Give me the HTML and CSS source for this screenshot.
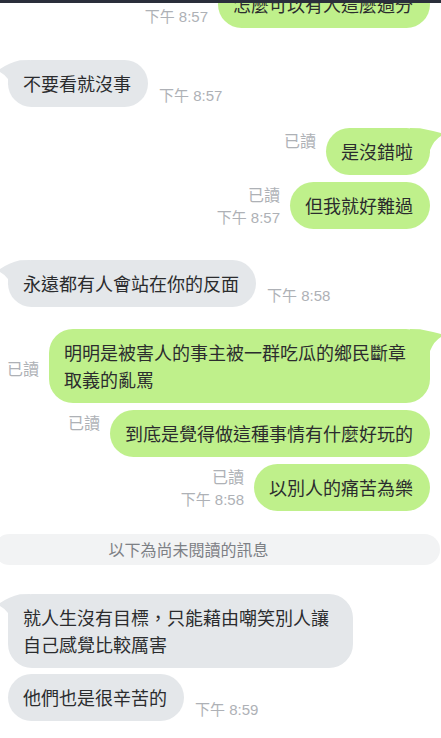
FILE: index.html
```html
<!DOCTYPE html>
<html lang="zh-Hant">
<head>
<meta charset="utf-8">
<title>Chat</title>
<link rel="stylesheet" href="styles.css">
</head>
<body>
<div class="screen">
  <div class="topbar"></div>
  <div class="chat">
    <div class="row out first">
      <div class="meta"><span>已讀</span><span>下午 8:57</span></div>
      <div class="bubble green">怎麼可以有人這麼過分</div>
    </div>

    <div class="row in gap-l2">
      <div class="bubble grey">
        <svg class="tail tail-left" width="30" height="28" viewBox="0 0 30 28"><path d="M0,11 Q9,5 20,2.3 Q25,2 30,2 L30,27 L8,27 L8,21 Q4,16 0,14 Z"/></svg>
        不要看就沒事
      </div>
      <div class="meta"><span>下午 8:57</span></div>
    </div>

    <div class="row out gap-m1">
      <div class="meta no-time"><span>已讀</span></div>
      <div class="bubble green">
        <svg class="tail tail-right" width="41" height="28" viewBox="0 0 41 28"><path d="M41,7 Q31,4.5 20,2.3 Q15,2 10,2 L10,27 L30,27 L30,24 Q34,14 41,10 Z"/></svg>
        是沒錯啦
      </div>
    </div>

    <div class="row out gap-s">
      <div class="meta"><span>已讀</span><span>下午 8:57</span></div>
      <div class="bubble green">但我就好難過</div>
    </div>

    <div class="row in gap-l">
      <div class="bubble grey">
        <svg class="tail tail-left" width="30" height="28" viewBox="0 0 30 28"><path d="M0,11 Q9,5 20,2.3 Q25,2 30,2 L30,27 L8,27 L8,21 Q4,16 0,14 Z"/></svg>
        永遠都有人會站在你的反面
      </div>
      <div class="meta"><span>下午 8:58</span></div>
    </div>

    <div class="row out gap-m">
      <div class="meta no-time"><span>已讀</span></div>
      <div class="bubble green">
        <svg class="tail tail-right" width="41" height="28" viewBox="0 0 41 28"><path d="M41,7 Q31,4.5 20,2.3 Q15,2 10,2 L10,27 L30,27 L30,24 Q34,14 41,10 Z"/></svg>
        明明是被害人的事主被一群吃瓜的鄉民斷章取義的亂罵
      </div>
    </div>

    <div class="row out gap-s">
      <div class="meta no-time"><span>已讀</span></div>
      <div class="bubble green">到底是覺得做這種事情有什麼好玩的</div>
    </div>

    <div class="row out gap-s">
      <div class="meta"><span>已讀</span><span>下午 8:58</span></div>
      <div class="bubble green">以別人的痛苦為樂</div>
    </div>

    <div class="divider">以下為尚未閱讀的訊息</div>

    <div class="row in gap-d">
      <div class="bubble grey">
        <svg class="tail tail-left" width="30" height="28" viewBox="0 0 30 28"><path d="M0,11 Q9,5 20,2.3 Q25,2 30,2 L30,27 L8,27 L8,21 Q4,16 0,14 Z"/></svg>
        就人生沒有目標，只能藉由嘲笑別人讓自己感覺比較厲害
      </div>
    </div>

    <div class="row in gap-xs">
      <div class="bubble grey">他們也是很辛苦的</div>
      <div class="meta"><span>下午 8:59</span></div>
    </div>
  </div>
</div>
</body>
</html>
```

FILE: styles.css
```css
html, body {
  margin: 0;
  padding: 0;
  background: #ffffff;
}

.screen {
  position: relative;
  width: 441px;
  height: 738px;
  overflow: hidden;
  background: #ffffff;
  font-family: "Liberation Sans", "Noto Sans CJK TC", sans-serif;
}

.topbar {
  position: absolute;
  top: 0;
  left: 0;
  right: 0;
  height: 3px;
  background: #2a2f3b;
  z-index: 5;
}

.chat {
  display: flex;
  flex-direction: column;
}

.row {
  display: flex;
  align-items: flex-end;
}

.row.out {
  justify-content: flex-end;
  padding-right: 11px;
  gap: 10px;
}

.row.in {
  justify-content: flex-start;
  padding-left: 8px;
  gap: 11px;
}

.row.first { margin-top: -19px; }
.gap-l2 { margin-top: 32px; }
.gap-l { margin-top: 31px; }
.gap-m1 { margin-top: 21px; }
.gap-m { margin-top: 22px; }
.gap-s { margin-top: 7px; }
.gap-xs { margin-top: 6px; }
.gap-d { margin-top: 29px; }

.bubble {
  position: relative;
  isolation: isolate;
  box-sizing: border-box;
  padding: 10px 17px 10px 15px;
  border-radius: 24px;
  font-family: "Noto Sans CJK TC", sans-serif;
  font-size: 18px;
  line-height: 27px;
  color: #2b2c2e;
  word-break: break-all;
}

.bubble.green {
  background: #bff08b;
  max-width: 381px;
}

.bubble.grey {
  background: #e4e7ea;
  max-width: 345px;
}

.tail {
  position: absolute;
  top: -2px;
  z-index: -1;
  display: block;
}

.tail-left {
  left: -8px;
}

.tail-right {
  right: -11px;
}

.green .tail path { fill: #bff08b; }
.grey .tail path { fill: #e4e7ea; }

.meta {
  display: flex;
  flex-direction: column;
  font-size: 15px;
  line-height: 22px;
  color: #aeb1b6;
  white-space: nowrap;
}

.meta span:first-child:not(:last-child),
.out .meta span:first-child {
  font-size: 16px;
}

.out .meta { align-items: flex-end; }
.in .meta { align-items: flex-start; }

.meta.no-time { padding-bottom: 22px; }

.divider {
  margin-top: 23px;
  margin-left: -6px;
  width: 446px;
  height: 31px;
  box-sizing: border-box;
  padding-right: 57px;
  border-radius: 16px;
  background: #f2f3f4;
  text-align: center;
  font-family: "Noto Sans CJK TC", sans-serif;
  font-size: 16px;
  line-height: 31px;
  color: #7d8085;
}
```
